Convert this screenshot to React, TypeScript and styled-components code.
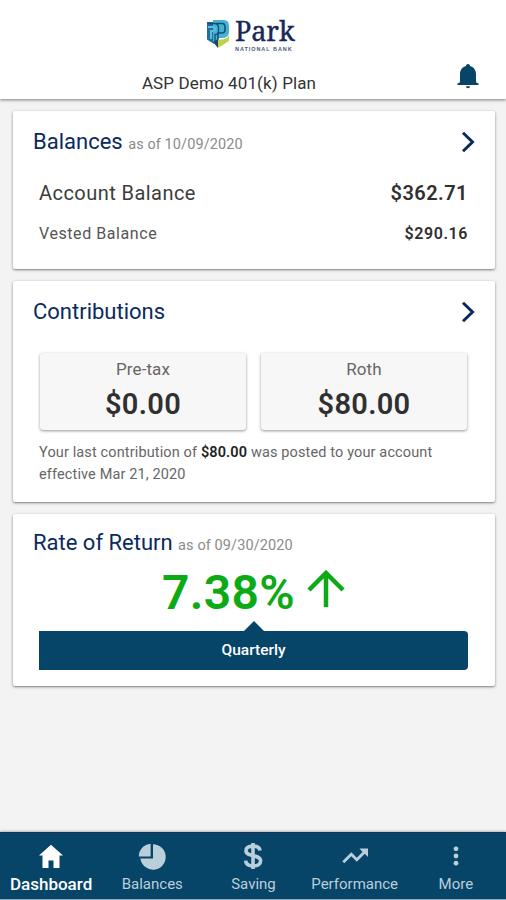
import React from 'react';
import styled, { createGlobalStyle } from 'styled-components';

const navy = '#064468';
const ink = '#0a2a5e';

const GlobalStyle = createGlobalStyle`
  *, *::before, *::after { box-sizing: border-box; }
  body { margin: 0; background: #f3f3f3; font-family: Roboto, "Liberation Sans", sans-serif; }
`;

const Screen = styled.div`
  height: 900px;
  display: flex;
  flex-direction: column;
  background: #f3f3f3;
  overflow: hidden;
`;

const Header = styled.header`
  height: 99px;
  flex: none;
  display: grid;
  grid-template-columns: 60px 1fr 60px;
  grid-template-rows: 63px 36px;
  padding: 0 8px;
  background: #fff;
  box-shadow: 0 1px 3px rgba(0, 0, 0, 0.5);
`;

const Brand = styled.div`
  grid-column: 1 / -1;
  display: flex;
  gap: 5px;
  padding: 15px 0 0 198px;
`;

const BrandMark = styled.svg`
  width: 24px;
  height: 31px;
  margin-top: 4px;
`;

const BrandText = styled.div`
  display: flex;
  flex-direction: column;
  color: #17285a;
  font-family: "Noto Serif", "Liberation Serif", serif;
`;

const BrandName = styled.span`
  font-size: 27px;
  line-height: 31px;
  letter-spacing: -0.1px;
  -webkit-text-stroke: 0.4px #17285a;
`;

const BrandSub = styled.span`
  font: 700 5.5px/6px "Liberation Sans", sans-serif;
  letter-spacing: 0.95px;
  white-space: nowrap;
  color: #4a587c;
`;

const PlanName = styled.h1`
  grid-column: 2;
  margin: 0;
  padding: 9px 48px 0 0;
  text-align: center;
  font-size: 17px;
  font-weight: 400;
  line-height: 22px;
  letter-spacing: 0.12px;
  color: #333;
`;

const Bell = styled.svg`
  width: 22px;
  height: 26px;
  margin: 0 0 0 19px;
`;

const Cards = styled.main`
  flex: 1;
  display: flex;
  flex-direction: column;
  gap: 12px;
  padding: 12px 11px 0 13px;
`;

const Card = styled.section<{ $height: number }>`
  height: ${(p) => p.$height}px;
  flex: none;
  display: flex;
  flex-direction: column;
  padding: 0 27px 0 26px;
  background: #fff;
  border-radius: 2px;
  box-shadow: 0 1px 3px rgba(0, 0, 0, 0.42), 0 1px 1px rgba(0, 0, 0, 0.12);
`;

const CardHead = styled.div`
  height: 61px;
  flex: none;
  display: flex;
  align-items: center;
  justify-content: space-between;
  margin: 0 -7px 0 -6px;
`;

const Title = styled.h2<{ $drop?: number }>`
  margin: 0;
  padding-top: ${(p) => p.$drop ?? 0}px;
  font-size: 22px;
  font-weight: 400;
  line-height: 26px;
  letter-spacing: 0;
  color: ${ink};
`;

const AsOf = styled.small`
  font-size: 14.5px;
  letter-spacing: 0.1px;
  color: #8b8b8b;
`;

const Chevron = styled.svg`
  width: 14px;
  height: 22px;
`;

const Row = styled.div<{ $minor?: boolean }>`
  display: flex;
  justify-content: space-between;
  height: ${(p) => (p.$minor ? 40 : 41)}px;
  line-height: 42px;
  font-size: ${(p) => (p.$minor ? 16 : 20)}px;
  letter-spacing: ${(p) => (p.$minor ? 0.57 : 0.45)}px;
  color: ${(p) => (p.$minor ? '#555' : '#3c3c3c')};
`;

const Amount = styled.span`
  font-weight: 600;
  color: #303030;
`;

const Tiles = styled.div`
  display: grid;
  grid-template-columns: 206px 206px;
  justify-content: space-between;
  margin: 11px 1px 0;
`;

const Tile = styled.div`
  height: 77px;
  display: flex;
  flex-direction: column;
  align-items: center;
  background: #f7f7f7;
  border-radius: 3px;
  box-shadow: 0 1px 3px rgba(0, 0, 0, 0.42);
`;

const TileLabel = styled.span`
  margin-top: 5px;
  font-size: 17px;
  line-height: 22px;
  letter-spacing: 0.1px;
  color: #666;
`;

const TileValue = styled.strong`
  margin-top: 7px;
  font-size: 29px;
  line-height: 34px;
  font-weight: 600;
  letter-spacing: 0.3px;
  color: #303030;
`;

const Note = styled.p`
  margin: 12px 0 0;
  font-size: 14.5px;
  line-height: 22px;
  letter-spacing: 0.13px;
  white-space: nowrap;
  color: #666;

  b { font-weight: 600; color: #222; }
`;

const Rate = styled.div`
  height: 56px;
  display: flex;
  justify-content: center;
  gap: 12px;
  font-size: 48px;
  line-height: 36px;
  font-weight: 600;
  letter-spacing: 0.3px;
  color: #0caa14;
`;

const UpArrow = styled.svg`
  width: 38px;
  height: 39px;
  margin-top: -5px;
`;

const Period = styled.div`
  position: relative;
  height: 39px;
  border-radius: 0 4px 4px 0;
  background: ${navy};
  color: #fff;
  text-align: center;
  font-size: 15.5px;
  font-weight: 500;
  line-height: 39px;

  &::before {
    content: '';
    position: absolute;
    left: 50%;
    top: -10px;
    margin-left: -11px;
    border: solid transparent;
    border-width: 0 11px 11px;
    border-bottom-color: ${navy};
  }
`;

const TabBar = styled.nav`
  height: 68px;
  flex: none;
  display: grid;
  grid-template-columns: repeat(5, 1fr);
  background: ${navy};
  border-top: 1px solid #173158;
  border-bottom: 1px solid #8faabd;
  box-shadow: 0 -1px 2px rgba(0, 0, 0, 0.25);
`;

const Tab = styled.a<{ $active?: boolean }>`
  display: flex;
  flex-direction: column;
  align-items: center;
  padding: 8px 0 0 1px;
  white-space: nowrap;
  color: ${(p) => (p.$active ? '#fff' : '#bbcedb')};
  font-size: ${(p) => (p.$active ? 17 : 15)}px;
  font-weight: ${(p) => (p.$active ? 500 : 400)};
  line-height: 22px;

  svg { width: 30px; height: 30px; margin-bottom: 2px; fill: currentColor; }
`;

const Next = () => (
  <Chevron viewBox="0 0 14 22">
    <path d="M2 1.7 11.5 11 2 20.3" fill="none" stroke={ink} strokeWidth="3" />
  </Chevron>
);

const tabs = [
  { label: 'Dashboard', icon: <path d="M15 3.8 27 14.5h-3.500V27h-6v-7.500h-5V27h-6V14.500H3z" /> },
  {
    label: 'Balances',
    icon: (
      <>
        <path d="M13.600 2.700v12.800H1.800A12.800 12.800 0 0 1 13.600 2.700z" />
        <path d="M16 3.300A12.700 12.700 0 1 1 3.400 17.600H16z" />
      </>
    ),
  },
  {
    label: 'Saving',
    icon: (
      <path
        d="M22 9.500c-.4-3.200-2.900-4.400-7-4.400s-7 1.500-7 4.700c0 6.800 14.600 3 14.600 10.100 0 3.300-3.100 5-7.300 5-4.700 0-7.400-1.700-7.700-5.300M15 2v26"
        fill="none"
        stroke="currentColor"
        strokeWidth="3.600"
      />
    ),
  },
  {
    label: 'Performance',
    icon: <path d="M19.500 7.500h8.500v8.500l-3.200-3.200-8 8-5.500-5.500-7 7L2.300 20.300l9-9 5.500 5.500 5.700-5.900z" />,
  },
  {
    label: 'More',
    icon: (
      <>
        <circle cx="15" cy="7.800" r="2.400" />
        <circle cx="15" cy="15" r="2.400" />
        <circle cx="15" cy="22.200" r="2.400" />
      </>
    ),
  },
];

export default function App() {
  return (
    <Screen>
      <GlobalStyle />
      <Header>
        <Brand>
          <BrandMark viewBox="0 0 24 31">
            <path d="M1 3H8V25L1 20.500z" fill="#236d9d" />
            <path d="M7 1h11q5 0 5 6v7q-1 5-7 5h-4v8l-5-4z" fill="#45b2d2" />
            <path d="M1.500 4.500h7q4 0 4 4v4q0 3-3.500 3v8" fill="none" stroke="#174c7b" strokeWidth="1.300" />
            <path d="M10 4.500h6q3 0 3 3.500v3q0 3-3.500 3H12v7" fill="none" stroke="#174c7b" strokeWidth="1.600" />
            <path d="M2 8h5q2 0 2 2t-2 2H5v8" fill="none" stroke="#58bedc" strokeWidth="2" />
            <path d="M12 20.500h5q5-1 6-5v6.500l-11 7z" fill="#bed34b" />
            <path d="M7 23l5-3v9z" fill="#164672" />
          </BrandMark>
          <BrandText>
            <BrandName>Park</BrandName>
            <BrandSub>NATIONAL BANK</BrandSub>
          </BrandText>
        </Brand>
        <PlanName>ASP Demo 401(k) Plan</PlanName>
        <Bell viewBox="0 0 22 26">
          <path
            d="M11 1c1.200 0 2 .8 2 2 3.500 .8 6 4 6 8v8.300l2.500 1.200v1.500H.5v-1.500L3 19.300V11c0-4 2.500-7.200 6-8 0-1.200.8-2 2-2zM9 23.300h4c0 1.200-.8 2-2 2s-2-.8-2-2z"
            fill={navy}
          />
        </Bell>
      </Header>
      <Cards>
        <Card $height={158}>
          <CardHead>
            <Title $drop={3}>Balances <AsOf>as of 10/09/2020</AsOf></Title>
            <Next />
          </CardHead>
          <Row><span>Account Balance</span><Amount>$362.71</Amount></Row>
          <Row $minor><span>Vested Balance</span><Amount>$290.16</Amount></Row>
        </Card>
        <Card $height={221}>
          <CardHead>
            <Title $drop={1}>Contributions</Title>
            <Next />
          </CardHead>
          <Tiles>
            <Tile><TileLabel>Pre-tax</TileLabel><TileValue>$0.00</TileValue></Tile>
            <Tile><TileLabel>Roth</TileLabel><TileValue>$80.00</TileValue></Tile>
          </Tiles>
          <Note>
            Your last contribution of <b>$80.00</b> was posted to your account<br />
            effective Mar 21, 2020
          </Note>
        </Card>
        <Card $height={172}>
          <CardHead>
            <Title>Rate of Return <AsOf>as of 09/30/2020</AsOf></Title>
          </CardHead>
          <Rate>
            7.38%
            <UpArrow viewBox="0 0 38 39">
              <path d="M19 37V3M2 20 19 3l17 17" fill="none" stroke="currentColor" strokeWidth="4.500" />
            </UpArrow>
          </Rate>
          <Period>Quarterly</Period>
        </Card>
      </Cards>
      <TabBar>
        {tabs.map((t, i) => (
          <Tab key={t.label} $active={i === 0}>
            <svg viewBox="0 0 30 30">{t.icon}</svg>
            {t.label}
          </Tab>
        ))}
      </TabBar>
    </Screen>
  );
}
